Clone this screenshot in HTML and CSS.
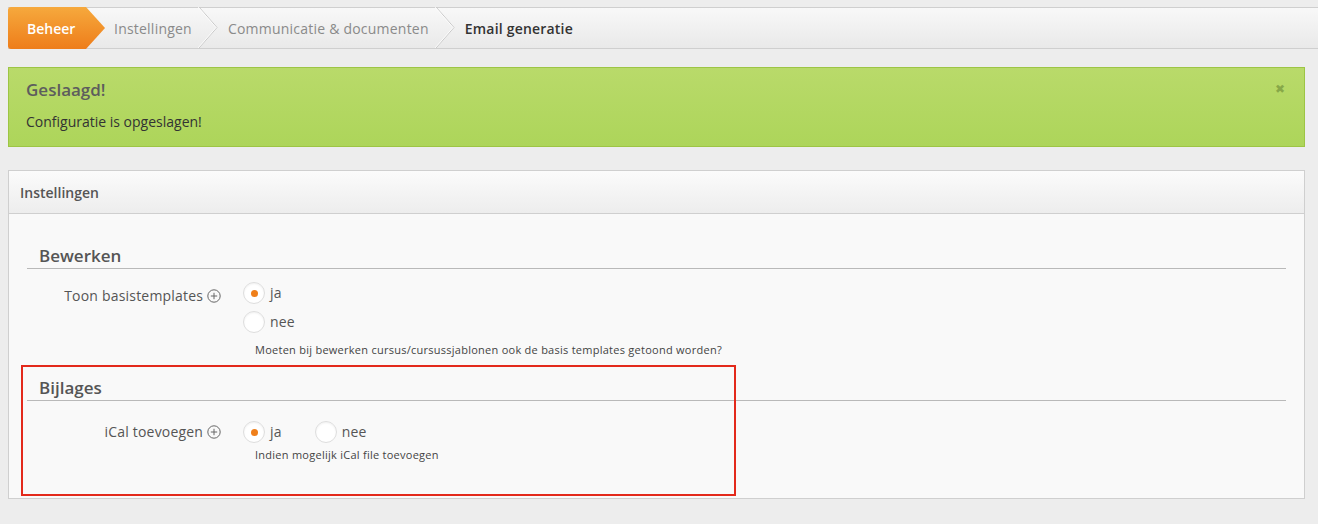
FILE: index.html
```html
<!DOCTYPE html>
<html lang="nl">
<head>
<meta charset="utf-8">
<title>Email generatie</title>
<link rel="stylesheet" href="styles.css">
</head>
<body>
<div class="page">
  <nav class="crumbs">
    <a class="crumb-home">Beheer</a>
    <a class="crumb">Instellingen</a>
    <svg class="sep" width="20" height="41" viewBox="0 0 20 41"><polyline points="1,0 19,20.5 1,41" fill="none" stroke="#c9c9c9" stroke-width="1"/><polyline points="0,0 18,20.5 0,41" fill="none" stroke="#ffffff" stroke-width="1" opacity="0.8"/></svg>
    <a class="crumb">Communicatie &amp; documenten</a>
    <svg class="sep" width="20" height="41" viewBox="0 0 20 41"><polyline points="1,0 19,20.5 1,41" fill="none" stroke="#c9c9c9" stroke-width="1"/><polyline points="0,0 18,20.5 0,41" fill="none" stroke="#ffffff" stroke-width="1" opacity="0.8"/></svg>
    <span class="crumb current">Email generatie</span>
  </nav>

  <div class="alert">
    <span class="alert-close">&#x2716;</span>
    <h4 class="alert-title">Geslaagd!</h4>
    <p class="alert-text">Configuratie is opgeslagen!</p>
  </div>

  <section class="panel">
    <header class="panel-head">Instellingen</header>
    <div class="panel-body">
      <div class="highlight"></div>
      <fieldset class="group">
        <legend class="group-title">Bewerken</legend>
        <div class="row">
          <div class="label">Toon basistemplates <svg class="plus" width="14" height="14" viewBox="0 0 14 14"><circle cx="7" cy="7" r="6.2" fill="none" stroke="#666" stroke-width="1"/><path d="M7 3.8v6.4M3.8 7h6.4" stroke="#666" stroke-width="1"/></svg></div>
          <div class="controls">
            <div class="stack">
              <label class="opt"><span class="radio on"></span>ja</label>
              <label class="opt"><span class="radio"></span>nee</label>
            </div>
            <p class="help">Moeten bij bewerken cursus/cursussjablonen ook de basis templates getoond worden?</p>
          </div>
        </div>
      </fieldset>
      <fieldset class="group second">
        <legend class="group-title">Bijlages</legend>
        <div class="row">
          <div class="label">iCal toevoegen <svg class="plus" width="14" height="14" viewBox="0 0 14 14"><circle cx="7" cy="7" r="6.2" fill="none" stroke="#666" stroke-width="1"/><path d="M7 3.8v6.4M3.8 7h6.4" stroke="#666" stroke-width="1"/></svg></div>
          <div class="controls">
            <div class="inline">
              <label class="opt"><span class="radio on"></span>ja</label>
              <label class="opt"><span class="radio"></span>nee</label>
            </div>
            <p class="help">Indien mogelijk iCal file toevoegen</p>
          </div>
        </div>
      </fieldset>
    </div>
  </section>
</div>
</body>
</html>
```

FILE: styles.css
```css
* { box-sizing: border-box; }
html, body { margin: 0; padding: 0; }
body {
  background: #ededed;
  font-family: "Open Sans", "Liberation Sans", sans-serif;
  color: #333;
  width: 1318px;
  height: 524px;
  overflow: hidden;
}
.page { padding: 7px 13px 0 8px; }

/* breadcrumbs */
.crumbs {
  display: flex;
  align-items: center;
  height: 42px;
  margin-right: -13px;
  border-top: 1px solid #cfcfcf;
  border-bottom: 1px solid #cfcfcf;
  background: linear-gradient(#f8f8f8, #e9e9e9);
  font-size: 14px;
}
.crumb-home {
  align-self: stretch;
  margin: -1px 0;
  width: 97px;
  padding-left: 19px;
  display: flex;
  align-items: center;
  color: #fff;
  font-weight: 600;
  background: linear-gradient(#f6a93d, #ee7d1a);
  clip-path: polygon(0 0, 78px 0, 97px 50%, 78px 100%, 0 100%);
  border-radius: 3px 0 0 3px;
}
.crumb {
  color: #8a8a8a;
  padding: 0 6px 0 10px;
  letter-spacing: 0.22px;
}
.crumb-home + .crumb { padding-left: 9px; }
.sep { flex: none; display: block; margin-top: -1px; }
.current { color: #333; font-weight: 600; letter-spacing: 0.2px; }

/* alert */
.alert {
  position: relative;
  margin-top: 18px;
  height: 80px;
  border: 1px solid #9dc544;
  background: linear-gradient(#b9da6a, #add55a);
  padding: 9px 17px;
}
.alert-title {
  margin: 0;
  font-size: 17px;
  font-weight: 600;
  color: #5d5d5d;
  line-height: 26px;
}
.alert-text {
  margin: 9px 0 0;
  font-size: 14px;
  line-height: 20px;
  color: #333;
}
.alert-close {
  position: absolute;
  right: 19px;
  top: 12px;
  font-size: 12px;
  color: #87a848;
}

/* panel */
.panel {
  margin-top: 23px;
  border: 1px solid #cfcfcf;
  background: #f9f9f9;
  height: 329px;
}
.panel-head {
  height: 43px;
  padding: 0 11px;
  display: flex;
  align-items: center;
  font-size: 14px;
  font-weight: 600;
  color: #555;
  background: linear-gradient(#fbfbfb, #ededed);
  border-bottom: 1px solid #cfcfcf;
}
.panel-body {
  position: relative;
  padding: 30px 18px 0 18px;
}
.group {
  border: 0;
  margin: 0;
  padding: 0;
  min-width: 0;
}
.group-title {
  display: block;
  width: 100%;
  padding: 0 12px;
  font-size: 17px;
  font-weight: 600;
  color: #555;
  line-height: 24px;
  border-bottom: 1px solid #b9b9b9;
}
.group.second { margin-top: 18px; }
.row {
  display: flex;
  margin-top: 13px;
}
.second .row { margin-top: 20px; }
.label {
  width: 194px;
  text-align: right;
  font-size: 14px;
  color: #555;
  line-height: 22px;
  padding-top: 3px;
  white-space: nowrap;
  letter-spacing: 0.2px;
}
.second .label { padding-top: 0; }
.plus { vertical-align: -2px; margin-left: 0; }
.controls { margin-left: 22px; }
.stack { display: flex; flex-direction: column; gap: 7px; }
.inline { display: flex; gap: 33px; }
.opt {
  display: flex;
  align-items: center;
  font-size: 14px;
  color: #555;
  line-height: 22px;
  letter-spacing: 0.2px;
}
.radio {
  width: 22px;
  height: 22px;
  border-radius: 50%;
  background: #fff;
  border: 1px solid #dedede;
  box-shadow: inset 0 1px 2px rgba(0,0,0,0.06);
  margin-right: 5px;
  display: flex;
  align-items: center;
  justify-content: center;
}
.radio.on::after {
  content: "";
  width: 7px;
  height: 7px;
  border-radius: 50%;
  background: #ef7f1a;
}
.help {
  margin: 9px 0 0 12px;
  font-size: 11px;
  line-height: 16px;
  color: #444;
  letter-spacing: 0.26px;
}
.second .help { margin-top: 4px; }

.highlight {
  position: absolute;
  left: 12px;
  top: 151px;
  width: 715px;
  height: 131px;
  border: 2px solid #e3291b;
  pointer-events: none;
}
```
